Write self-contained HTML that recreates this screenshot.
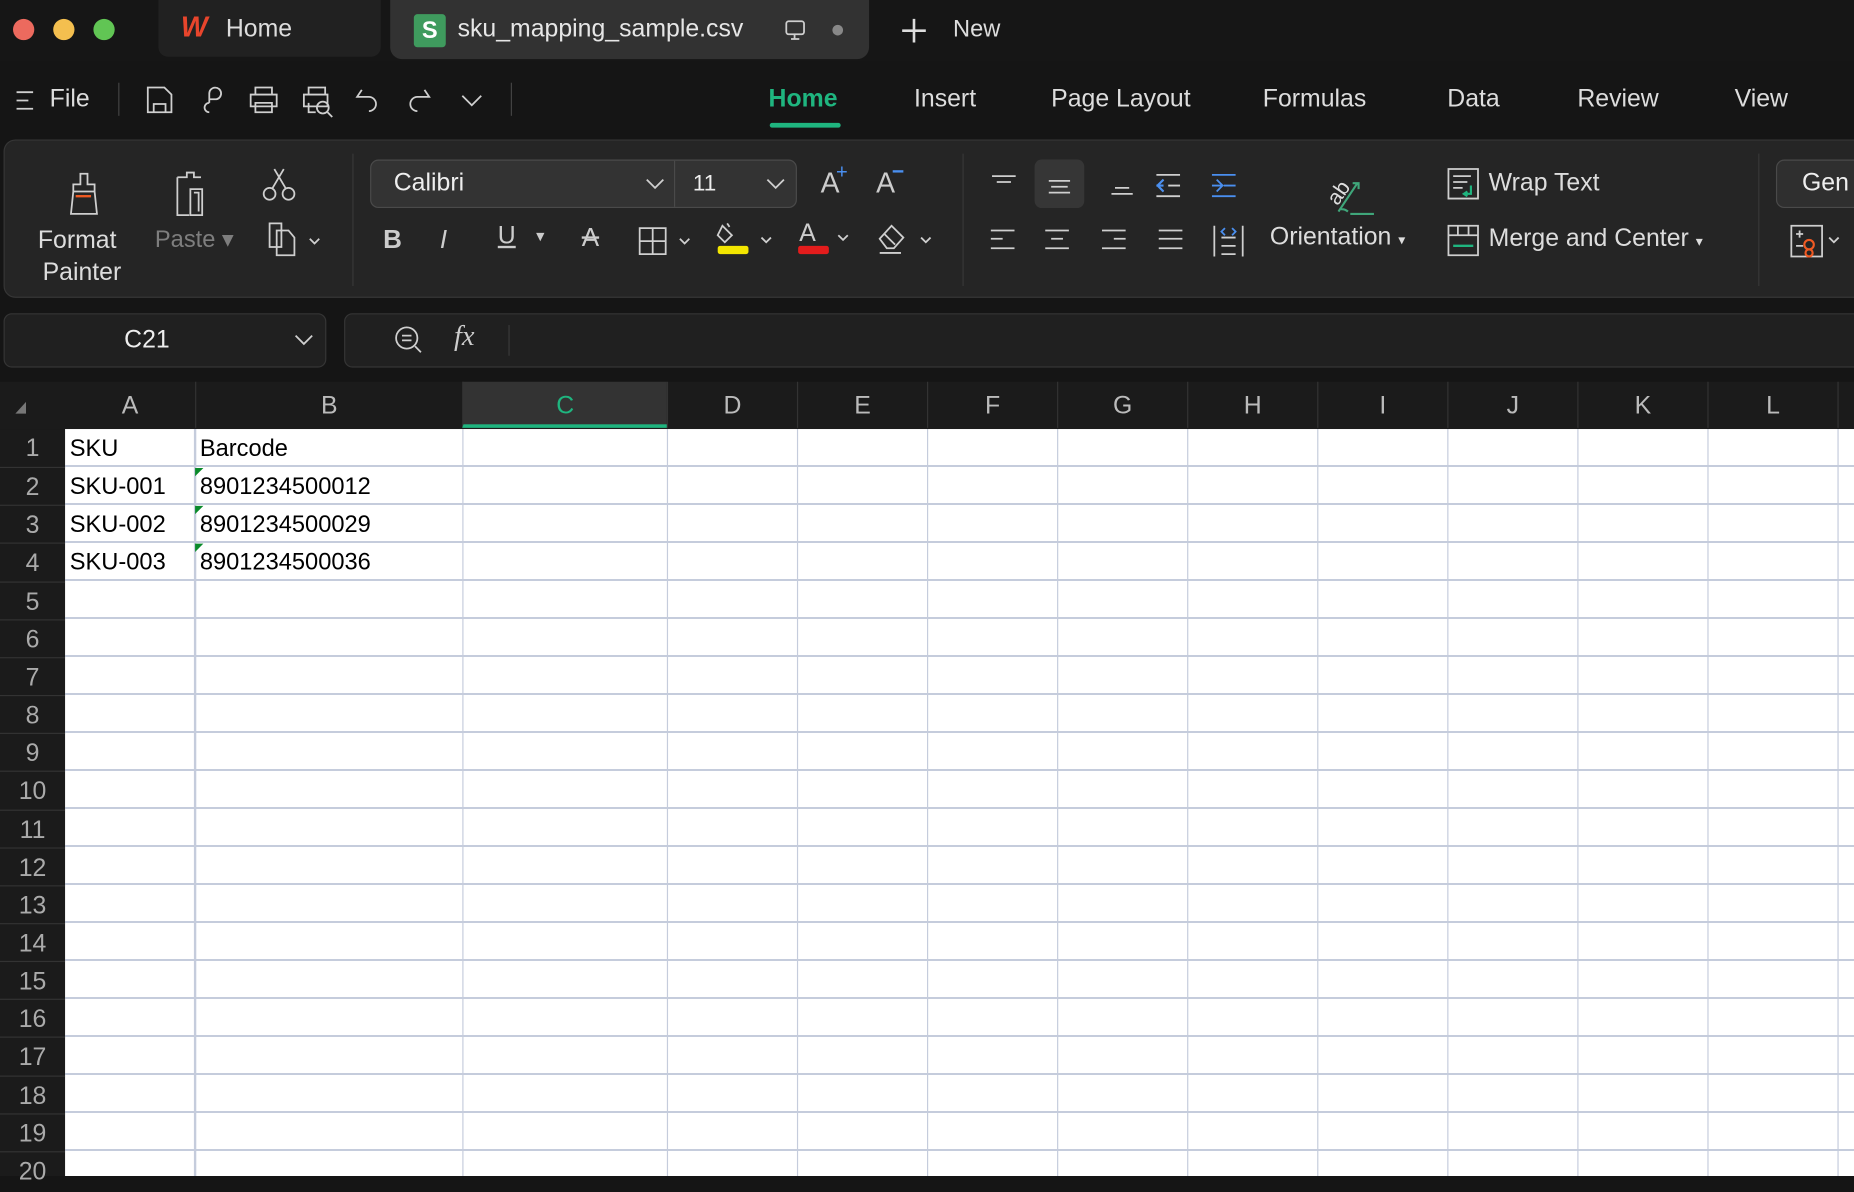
<!DOCTYPE html>
<html><head><meta charset="utf-8"><style>
*{margin:0;padding:0;box-sizing:border-box}
html,body{width:1854px;height:1176px;overflow:hidden;background:#151515}
#w{position:absolute;left:0;top:0;width:1568px;height:995px;transform:scale(1.18240,1.18191);transform-origin:0 0;font-family:"Liberation Sans",sans-serif;color:#ddd;background:#151515}
.a{position:absolute}
.t{position:absolute;white-space:nowrap}
svg{position:absolute;overflow:visible}
.ic{fill:none;stroke:#cfcfcf;stroke-width:1.5}
.hd{position:absolute;top:0;height:39px;line-height:42px;text-align:center;font-size:21px;color:#bbb;border-left:1px solid #333}
.rn{position:absolute;left:0;width:55px;text-align:center;font-size:21px;color:#aaa;height:32px;line-height:34px;border-top:1px solid #333}
.cell{position:absolute;font-size:20px;color:#000;height:32px;line-height:34px}
.vl{position:absolute;top:363px;bottom:0;width:1.5px;background:#c5ccdc}
</style></head><body><div id="w">
<!-- title bar -->
<div class="a" style="left:0;top:0;width:1568px;height:52px;background:#161616"></div>
<div class="a" style="left:12;top:16px;left:11px;width:18px;height:18px;border-radius:50%;background:#ec6a5e"></div>
<div class="a" style="left:45px;top:16px;width:18px;height:18px;border-radius:50%;background:#f4bf4f"></div>
<div class="a" style="left:79px;top:16px;width:18px;height:18px;border-radius:50%;background:#61c554"></div>
<div class="a" style="left:134px;top:0;width:188px;height:48px;background:#212121;border-radius:0 0 8px 8px"></div>
<div class="t" style="left:153px;top:10px;font-size:24px;font-weight:bold;color:#e8452c;font-style:italic">W</div>
<div class="t" style="left:191px;top:13px;font-size:21px;color:#ddd">Home</div>
<div class="a" style="left:330px;top:0;width:405px;height:50px;background:#323232;border-radius:0 0 10px 10px"></div>
<div class="a" style="left:350px;top:12px;width:27px;height:28px;background:#3f9b5e;border-radius:3px;color:#fff;font-size:20px;font-weight:bold;text-align:center;line-height:28px">S</div>
<div class="t" style="left:387px;top:13px;font-size:21px;color:#e6e6e6">sku_mapping_sample.csv</div>
<svg style="left:664px;top:17px" width="18" height="18"><rect x="1" y="1" width="15" height="11" rx="2" class="ic" stroke="#999"/><path d="M8 12v4M5 16h7" class="ic" stroke="#999"/></svg>
<div class="a" style="left:704px;top:21px;width:9px;height:9px;border-radius:50%;background:#888"></div>
<svg style="left:762px;top:15px" width="22" height="22"><path d="M11 1v20M1 11h20" stroke="#ddd" stroke-width="2.2"/></svg>
<div class="t" style="left:806px;top:14px;font-size:20px;color:#ddd">New</div>
<!-- toolbar -->
<svg style="left:14px;top:77px" width="16" height="18"><path d="M0 1h14M0 8h10M0 15h14" class="ic"/></svg>
<div class="t" style="left:42px;top:72px;font-size:21px;color:#ddd">File</div>
<div class="a" style="left:100px;top:70px;width:1px;height:28px;background:#444"></div>
<svg style="left:123px;top:73px" width="24" height="24"><path d="M2 1h14l6 6v15H2z M7 22v-7h10v7" class="ic"/></svg>
<svg style="left:168px;top:73px" width="24" height="24"><path d="M9 14V6a5 5 0 1 1 6 5h-6M9 14a4 4 0 1 0 0 8" class="ic"/></svg>
<svg style="left:210px;top:73px" width="26" height="24"><path d="M6 7V1h14v6M2 7h22v10H2zM6 14h14v8H6z" class="ic"/></svg>
<svg style="left:255px;top:73px" width="28" height="26"><path d="M6 7V1h14v6M2 7h20v10H2zM6 14v8h6" class="ic"/><circle cx="18" cy="18" r="5" class="ic"/><path d="M22 22l4 4" class="ic"/></svg>
<svg style="left:300px;top:74px" width="22" height="24"><path d="M6 2L2 8h10a6 6 0 0 1 0 12" class="ic"/></svg>
<svg style="left:345px;top:74px" width="22" height="24"><path d="M14 2l4 6H8a6 6 0 0 0 0 12" class="ic" stroke="#777"/></svg>
<svg style="left:390px;top:80px" width="18" height="10"><path d="M1 1l8 8 8-8" class="ic"/></svg>
<div class="a" style="left:432px;top:70px;width:1px;height:28px;background:#444"></div>
<div class="t" style="left:650px;top:72px;font-size:21px;color:#1fb57f;font-weight:bold">Home</div>
<div class="a" style="left:651px;top:104px;width:60px;height:4px;border-radius:2px;background:#1fb57f"></div>
<div class="t" style="left:773px;top:72px;font-size:21px;color:#ddd">Insert</div>
<div class="t" style="left:889px;top:72px;font-size:21px;color:#ddd">Page Layout</div>
<div class="t" style="left:1068px;top:72px;font-size:21px;color:#ddd">Formulas</div>
<div class="t" style="left:1224px;top:72px;font-size:21px;color:#ddd">Data</div>
<div class="t" style="left:1334px;top:72px;font-size:21px;color:#ddd">Review</div>
<div class="t" style="left:1467px;top:72px;font-size:21px;color:#ddd">View</div>
<!-- ribbon -->
<div class="a" style="left:3px;top:118px;width:1600px;height:134px;background:#252525;border:1px solid #363636;border-radius:10px"></div>
<svg style="left:54px;top:146px" width="34" height="38"><path d="M14 1h6v9h6v6H8v-6h6z M8 16h18l2 19H6z" class="ic"/><path d="M10 20h13" stroke="#f05a23" stroke-width="2"/></svg>
<div class="t" style="left:32px;top:192px;font-size:21px;color:#ddd">Format</div>
<div class="t" style="left:36px;top:219px;font-size:21px;color:#ddd">Painter</div>
<svg style="left:149px;top:144px" width="36" height="40"><path d="M1 6h8v-4h6v4h6M1 6v32h10M12 16h10v22H12z M15 19h4v16" class="ic" stroke="#888"/></svg>
<div class="t" style="left:131px;top:190px;font-size:20px;color:#7e7e7e">Paste ▾</div>
<svg style="left:222px;top:142px" width="30" height="30"><circle cx="6" cy="22" r="5" class="ic" stroke="#4a8ff0"/><circle cx="22" cy="22" r="5" class="ic" stroke="#4a8ff0"/><path d="M8 18L18 1M20 18L10 1" class="ic"/></svg>
<svg style="left:226px;top:188px" width="50" height="32"><path d="M2 1h10v20H2z" class="ic" stroke="#4a8ff0"/><path d="M8 7h10l5 6v15H8z" class="ic"/><path d="M36 14l4 4 4-4" class="ic"/></svg>
<div class="a" style="left:298px;top:130px;width:1px;height:112px;background:#383838"></div>
<div class="a" style="left:313px;top:135px;width:361px;height:41px;background:#333;border:1.5px solid #4a4a4a;border-radius:7px"></div>
<div class="a" style="left:570px;top:136px;width:1px;height:39px;background:#4a4a4a"></div>
<div class="t" style="left:333px;top:143px;font-size:21px;color:#eee">Calibri</div>
<svg style="left:546px;top:151px" width="16" height="10"><path d="M1 1l7 7 7-7" class="ic" stroke="#aaa"/></svg>
<div class="t" style="left:586px;top:145px;font-size:19px;color:#eee">11</div>
<svg style="left:648px;top:151px" width="16" height="10"><path d="M1 1l7 7 7-7" class="ic" stroke="#aaa"/></svg>
<div class="t" style="left:694px;top:142px;font-size:24px;color:#ccc">A</div><div class="t" style="left:707px;top:136px;font-size:17px;color:#4a8ff0">+</div>
<div class="t" style="left:741px;top:142px;font-size:24px;color:#ccc">A</div><div class="a" style="left:755px;top:144px;width:9px;height:2px;background:#4a8ff0"></div>
<div class="t" style="left:324px;top:190px;font-size:22px;font-weight:bold;color:#ccc">B</div>
<div class="t" style="left:372px;top:190px;font-size:22px;font-style:italic;color:#ccc">I</div>
<div class="t" style="left:421px;top:188px;font-size:21px;color:#ccc;text-decoration:underline">U</div><div class="t" style="left:451px;top:193px;font-size:12px;color:#ccc">▼</div>
<div class="t" style="left:492px;top:188px;font-size:22px;color:#ccc;text-decoration:line-through">A</div>
<svg style="left:540px;top:192px" width="46" height="24"><path d="M1 1h22v22H1zM12 1v22M1 12h22" class="ic"/><path d="M35 10l4 4 4-4" class="ic"/></svg>
<svg style="left:605px;top:188px" width="50" height="30"><path d="M6 3l8 8-6 6-6-6z M10 1l2 3" class="ic"/><rect x="2" y="20" width="26" height="7" rx="2" fill="#f3e600"/><path d="M39 13l4 4 4-4" class="ic"/></svg>
<div class="t" style="left:676px;top:186px;font-size:21px;color:#ccc">A</div>
<div class="a" style="left:675px;top:208px;width:26px;height:7px;background:#e31c1c;border-radius:2px"></div>
<svg style="left:708px;top:198px" width="12" height="8"><path d="M1 1l4 4 4-4" class="ic"/></svg>
<svg style="left:742px;top:188px" width="50" height="28"><path d="M2 14l10-11 10 10-8 9H8z M6 10l9 9 M2 26h18" class="ic"/><path d="M37 13l4 4 4-4" class="ic"/></svg>
<div class="a" style="left:814px;top:130px;width:1px;height:112px;background:#383838"></div>
<div class="a" style="left:875px;top:135px;width:42px;height:41px;background:#363636;border-radius:6px"></div>
<svg style="left:838px;top:148px" width="210" height="24"><g class="ic" stroke-width="1.8"><path d="M1 1h20M5 6h12"/><path d="M49 5h18M51 10h14M49 15h18"/><path d="M105 11h12M102 16h18"/><path d="M140 0h20M150 9h10M140 18h20M146 4l-5 5 5 5M141 9h5"/><path d="M187 0h20M197 9h10M187 18h20M191 4l5 5-5 5M187 9h9" stroke="#4a8ff0"/></g><path d="M140 9h6M141 9l5-5M141 9l5 5" stroke="#4a8ff0" stroke-width="1.8" fill="none"/></svg>
<svg style="left:838px;top:193px" width="216" height="26"><g class="ic" stroke-width="1.8"><path d="M0 2h20M0 9h10M0 17h20"/><path d="M46 2h20M51 9h10M46 17h20"/><path d="M94 2h20M104 9h10M94 17h20"/><path d="M142 2h20M142 9h20M142 17h20"/><path d="M189 -2v26M213 -2v26M195 8h12M195 15h12M195 22h12"/></g><path d="M198 0l-3 3 3 3M204 0l3 3-3 3" stroke="#4a8ff0" stroke-width="1.5" fill="none"/></svg>
<svg style="left:1120px;top:143px" width="44" height="42"><text x="2" y="26" transform="rotate(-55 12 20)" font-size="18" fill="#ddd" font-family="Liberation Sans">ab</text><path d="M12 36L28 12 M24 12h5v5 M14 34a8 8 0 0 1 6 2 M22 38h20" stroke="#3fa67a" stroke-width="1.8" fill="none" stroke-dasharray=""/></svg>
<div class="t" style="left:1074px;top:189px;font-size:21px;color:#ddd">Orientation <span style="font-size:12px">▾</span></div>
<svg style="left:1224px;top:142px" width="28" height="28"><path d="M1 1h25v25H1z M5 7h15M5 12h12M5 17h8" class="ic"/><path d="M20 15v7h-5M17 20l-3 2 3 2" stroke="#1fb57f" stroke-width="1.8" fill="none"/></svg>
<div class="t" style="left:1259px;top:143px;font-size:21px;color:#ddd">Wrap Text</div>
<svg style="left:1224px;top:190px" width="28" height="28"><path d="M1 1h25v25H1z M1 9h25M9 1v8M18 1v8" class="ic"/><path d="M5 18h17" stroke="#1fb57f" stroke-width="2"/></svg>
<div class="t" style="left:1259px;top:190px;font-size:21px;color:#ddd">Merge and Center <span style="font-size:12px">▾</span></div>
<div class="a" style="left:1487px;top:130px;width:1px;height:112px;background:#383838"></div>
<div class="a" style="left:1502px;top:135px;width:100px;height:41px;background:#2f2f2f;border:1.5px solid #4a4a4a;border-radius:7px"></div>
<div class="t" style="left:1524px;top:143px;font-size:21px;color:#eee">Gen</div>
<svg style="left:1514px;top:190px" width="50" height="28"><path d="M1 1h26v26H1z M5 8h6M8 5v6M5 18h6" class="ic"/><circle cx="16" cy="17" r="4" fill="none" stroke="#f05a23" stroke-width="1.8"/><circle cx="16" cy="24" r="3" fill="none" stroke="#f05a23" stroke-width="1.8"/><path d="M33 11l4 4 4-4" class="ic"/></svg>
<!-- formula bar -->
<div class="a" style="left:3px;top:265px;width:273px;height:46px;background:#202020;border:1.5px solid #353535;border-radius:7px"></div>
<div class="t" style="left:105px;top:276px;font-size:21px;color:#eee">C21</div>
<svg style="left:249px;top:283px" width="16" height="10"><path d="M1 1l7 7 7-7" class="ic" stroke="#aaa"/></svg>
<div class="a" style="left:291px;top:265px;width:1300px;height:46px;background:#202020;border:1.5px solid #353535;border-radius:7px"></div>
<svg style="left:334px;top:276px" width="24" height="24"><circle cx="10" cy="10" r="9" class="ic"/><path d="M6 8h8M6 12h8M17 17l5 5" class="ic"/></svg>
<div class="t" style="left:384px;top:272px;font-size:24px;font-style:italic;font-family:'Liberation Serif',serif;color:#ccc">fx</div>
<div class="a" style="left:430px;top:275px;width:1px;height:26px;background:#3a3a3a"></div>
<!-- header row -->
<div class="a" style="left:0;top:323px;width:1568px;height:40px;background:#1b1b1b">
<svg style="left:12px;top:16px" width="12" height="12"><path d="M10 1v10H1z" fill="#777"/></svg>
<div class="hd" style="left:55px;width:110px;border-left:0">A</div>
<div class="hd" style="left:165px;width:226px">B</div>
<div class="hd" style="left:391px;width:173px;background:#333;color:#1fb57f;border-bottom:3px solid #1fb57f">C</div>
<div class="hd" style="left:564px;width:110px">D</div>
<div class="hd" style="left:674px;width:110px">E</div>
<div class="hd" style="left:784px;width:110px">F</div>
<div class="hd" style="left:894px;width:110px">G</div>
<div class="hd" style="left:1004px;width:110px">H</div>
<div class="hd" style="left:1114px;width:110px">I</div>
<div class="hd" style="left:1224px;width:110px">J</div>
<div class="hd" style="left:1334px;width:110px">K</div>
<div class="hd" style="left:1444px;width:110px">L</div>
<div class="hd" style="left:1554px;width:110px"></div>
</div>
<!-- grid -->
<div class="a" style="left:55px;top:363px;right:0;bottom:0;background:#fff repeating-linear-gradient(to bottom,transparent 0,transparent 30.6px,#c5ccdc 30.6px,#c5ccdc 32.15px)"></div>
<div class="vl" style="left:164px"></div><div class="vl" style="left:390.5px"></div><div class="vl" style="left:563.5px"></div><div class="vl" style="left:673.5px"></div><div class="vl" style="left:783.5px"></div><div class="vl" style="left:893.5px"></div><div class="vl" style="left:1003.5px"></div><div class="vl" style="left:1113.5px"></div><div class="vl" style="left:1223.5px"></div><div class="vl" style="left:1333.5px"></div><div class="vl" style="left:1443.5px"></div><div class="vl" style="left:1553.5px"></div>
<div class="a" style="left:0;top:363px;width:55px;bottom:0;background:#1b1b1b">
<div class="rn" style="top:0;border-top:0">1</div><div class="rn" style="top:32.15px">2</div><div class="rn" style="top:64.3px">3</div><div class="rn" style="top:96.45px">4</div><div class="rn" style="top:128.6px">5</div><div class="rn" style="top:160.75px">6</div><div class="rn" style="top:192.9px">7</div><div class="rn" style="top:225.05px">8</div><div class="rn" style="top:257.2px">9</div><div class="rn" style="top:289.35px">10</div><div class="rn" style="top:321.5px">11</div><div class="rn" style="top:353.65px">12</div><div class="rn" style="top:385.8px">13</div><div class="rn" style="top:417.95px">14</div><div class="rn" style="top:450.1px">15</div><div class="rn" style="top:482.25px">16</div><div class="rn" style="top:514.4px">17</div><div class="rn" style="top:546.55px">18</div><div class="rn" style="top:578.7px">19</div><div class="rn" style="top:610.85px">20</div>
</div>
<div class="cell" style="left:59px;top:363px">SKU</div><div class="cell" style="left:169px;top:363px">Barcode</div>
<div class="cell" style="left:59px;top:395px">SKU-001</div><div class="cell" style="left:169px;top:395px">8901234500012</div>
<div class="cell" style="left:59px;top:427px">SKU-002</div><div class="cell" style="left:169px;top:427px">8901234500029</div>
<div class="cell" style="left:59px;top:459px">SKU-003</div><div class="cell" style="left:169px;top:459px">8901234500036</div>
<svg style="left:165px;top:396px" width="8" height="8"><path d="M0 0h7L0 7z" fill="#0a8a2a"/></svg>
<svg style="left:165px;top:428px" width="8" height="8"><path d="M0 0h7L0 7z" fill="#0a8a2a"/></svg>
<svg style="left:165px;top:460px" width="8" height="8"><path d="M0 0h7L0 7z" fill="#0a8a2a"/></svg>
</div></body></html>
